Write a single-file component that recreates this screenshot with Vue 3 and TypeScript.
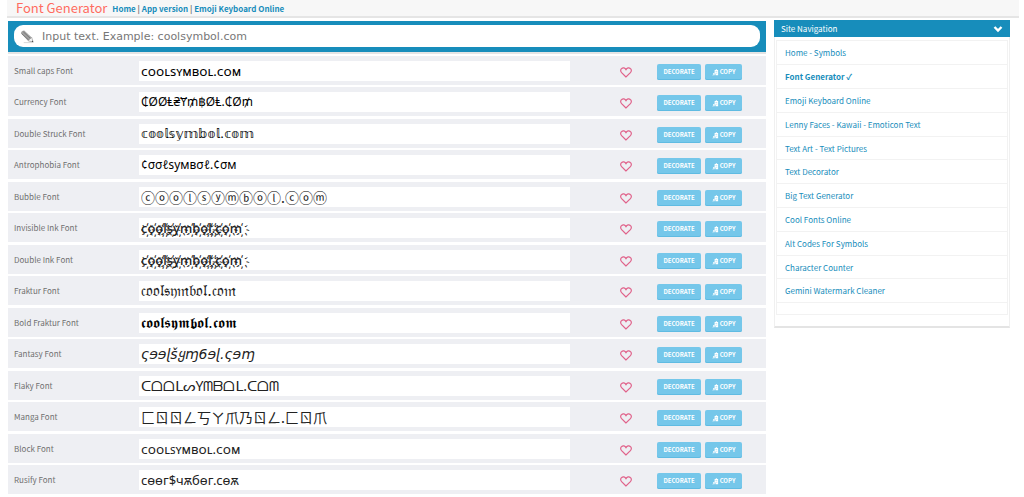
<script setup lang="ts">
import { ref } from 'vue'

interface FontRow { name: string; value: string; kind: string }

const text = ref('')
const rows: FontRow[] = [
  { name: 'Small caps Font', value: 'ᴄᴏᴏʟsʏᴍʙᴏʟ.ᴄᴏᴍ', kind: 'caps' },
  { name: 'Currency Font', value: '₵ØØⱠ₴Ɏ₥฿ØⱠ.₵Ø₥', kind: 'currency' },
  { name: 'Double Struck Font', value: '𝕔𝕠𝕠𝕝𝕤𝕪𝕞𝕓𝕠𝕝.𝕔𝕠𝕞', kind: 'math' },
  { name: 'Antrophobia Font', value: '¢σσℓѕумвσℓ.¢σм', kind: 'greek' },
  { name: 'Bubble Font', value: 'ⓒⓞⓞⓛⓢⓨⓜⓑⓞⓛ.ⓒⓞⓜ', kind: 'cjk' },
  { name: 'Invisible Ink Font', value: 'c҉o҉o҉l҉s҉y҉m҉b҉o҉l҉.҉c҉o҉m҉', kind: 'ink' },
  { name: 'Double Ink Font', value: 'c҉o҉o҉l҉s҉y҉m҉b҉o҉l҉.҉c҉o҉m҉', kind: 'ink' },
  { name: 'Fraktur Font', value: '𝔠𝔬𝔬𝔩𝔰𝔶𝔪𝔟𝔬𝔩.𝔠𝔬𝔪', kind: 'fraktur' },
  { name: 'Bold Fraktur Font', value: '𝖈𝖔𝖔𝖑𝖘𝖞𝖒𝖇𝖔𝖑.𝖈𝖔𝖒', kind: 'bold-fraktur' },
  { name: 'Fantasy Font', value: 'ςɘɘɭšყɱ6ɘɭ.ςɘɱ', kind: 'fantasy' },
  { name: 'Flaky Font', value: 'ᑕᗝᗝᒪᔕYᗰᗷᗝᒪ.ᑕᗝᗰ', kind: 'flaky' },
  { name: 'Manga Font', value: '匚ㄖㄖㄥ丂ㄚ爪乃ㄖㄥ.匚ㄖ爪', kind: 'cjk' },
  { name: 'Block Font', value: 'ᴄᴏᴏʟꜱʏᴍʙᴏʟ.ᴄᴏᴍ', kind: 'block' },
  { name: 'Rusify Font', value: 'cѳѳг$чѫбѳг.cѳѫ', kind: 'rusify' },
]

const links: string[] = [
  'Home - Symbols', 'Font Generator', 'Emoji Keyboard Online', 'Lenny Faces - Kawaii - Emoticon Text',
  'Text Art - Text Pictures', 'Text Decorator', 'Big Text Generator', 'Cool Fonts Online',
  'Alt Codes For Symbols', 'Character Counter', 'Gemini Watermark Cleaner',
]

function copy(value: string) {
  navigator.clipboard?.writeText(value)
}
</script>

<template>
  <div class="page">
    <header class="top">
      <h1>Font Generator</h1>
      <nav><a href="#">Home</a> | <a href="#">App version</a> | <a href="#">Emoji Keyboard Online</a></nav>
    </header>
    <div class="columns">
      <main>
        <div class="search">
          <label class="field">
            <svg class="pencil" viewBox="0 0 16 16" aria-hidden="true">
              <path d="M1 4.500Q1.500 1.500 4.500 1.500L12.500 9L13.800 14L8.500 12.500Z" fill="#a2a2a2" />
              <path d="M3.500 3L11.500 10.500M1.800 5L9.500 12" stroke="#707070" stroke-width=".9" />
              <path d="M8.500 12.500L12.500 9L14 14Z" fill="#f4f4f4" stroke="#a0a0a0" stroke-width=".7" />
              <path d="M12.300 13.500L14.200 14.200L13.600 12.200Z" fill="#444" />
              <path d="M4 14.500H13" stroke="#ccc" stroke-width=".8" />
            </svg>
            <input v-model="text" type="text" aria-label="Input text" placeholder="Input text. Example: coolsymbol.com">
          </label>
        </div>
        <section v-for="(row, i) in rows" :key="row.name" class="row">
          <label :for="'font-' + i">{{ row.name }}</label>
          <input :id="'font-' + i" class="value" :class="row.kind" type="text" readonly :value="row.value">
          <div class="actions">
            <button class="heart" type="button" :aria-label="'Like ' + row.name">
              <svg viewBox="0 0 12 11" aria-hidden="true"><path d="M6 10L1.6 5.6C.3 4.2.4 2.3 1.7 1.4 3 .4 5 .8 6 2.6 7 .8 9 .4 10.3 1.4c1.3.9 1.4 2.8.1 4.2Z" fill="none" stroke="#e0628a" stroke-width="1.2" /></svg>
            </button>
            <button class="btn decorate" type="button">DECORATE</button>
            <button class="btn copy" type="button" @click="copy(row.value)">
              <svg viewBox="0 0 8 8" aria-hidden="true"><path d="M3 1h1l1-1 1 1h1v6H4V5H3Z" fill="#fff" /><path d="M0 7h3V4L1 5l1 1Z" fill="#fff" /><path d="M4 3h2M5 5h1" stroke="#75c7ea" stroke-width=".6" /></svg>
              COPY
            </button>
          </div>
        </section>
      </main>
      <aside>
        <h2>Site Navigation
          <svg viewBox="0 0 10 8" aria-hidden="true"><path d="M1.500 2L5 5.500 8.500 2" fill="none" stroke="#fff" stroke-width="2.400" /></svg>
        </h2>
        <ul>
          <li v-for="(link, i) in links" :key="link"><a href="#" :class="{ current: i === 1 }">{{ link }}<span v-if="i === 1" class="tick"> ✓</span></a></li>
          <li class="blank"></li>
        </ul>
      </aside>
    </div>
  </div>
</template>

<style>
body { margin: 0; background: #fff; overflow: hidden; }
</style>

<style scoped>
* { box-sizing: border-box; }
.page { font-family: "Noto Sans CJK SC", sans-serif; font-size: 8px; color: #707070; }
a { color: #178dbb; text-decoration: none; }
.top { display: flex; align-items: center; gap: 5px; height: 18px; margin: 0 5px 2px 7px; padding-left: 9px; background: #f7f7f7; border-bottom: 2px solid #e5e5e5; }
h1 { margin: 0; font-size: 13px; line-height: 16px; font-weight: 400; color: #ff6c60; }
.top nav { font-weight: 700; line-height: 16px; padding-top: 2px; }
.columns { display: grid; grid-template-columns: minmax(0, 758fr) 236fr; gap: 8px; align-items: start; margin: 0 14px 0 8px; }
main { padding-top: 1px; }
.search { padding: 4px 6px; height: 31px; background: #178dbb; margin-bottom: 4px; box-shadow: 0 2px 0 #e4e4e4; }
.field { display: flex; align-items: center; gap: 7px; height: 22px; padding: 0 6px; border-radius: 9px; background: #fff; }
.pencil { width: 15px; height: 15px; }
.field input { flex: 1; min-width: 0; border: 0; outline: 0; padding: 0; background: none; font: 11px "DejaVu Sans", sans-serif; }
.field input::placeholder { color: #777; opacity: 1; }
.row { display: grid; grid-template-columns: 125fr 431fr 189fr; align-items: center; height: 29px; margin-bottom: 2px; padding: 0 7px 0 6px; background: #eeeff3; }
.row:nth-child(odd) { margin-bottom: 3px; }
.value { width: 100%; min-width: 0; height: 20px; padding: 0 2px; border: 0; outline: 0; background: #fff; color: #222; font: 13px "Noto Sans", "DejaVu Sans", sans-serif; }
.caps { color: #000; }
.ink { font-weight: 500; }
.currency, .greek { font-size: 12px; color: #000; }
.math { font-family: "DejaVu Sans", sans-serif; color: #000; }
.fraktur { font-family: "DejaVu Sans", sans-serif; font-size: 16px; }
.bold-fraktur { font-family: "DejaVu Sans", sans-serif; font-size: 15px; color: #000; }
.cjk { font-family: "Noto Sans CJK SC", sans-serif; font-size: 14px; }
.fantasy { font-family: "DejaVu Sans", sans-serif; font-size: 14px; font-style: italic; }
.flaky { font-size: 14px; }
.actions { display: flex; align-items: center; justify-content: flex-end; gap: 4px; padding: 3px 17px 0 0; }
button { border: 0; padding: 0; font: inherit; }
.heart { width: 12px; height: 12px; background: none; margin-right: 21px; }
.heart svg { display: block; width: 12px; height: 11px; }
.btn { display: flex; align-items: center; justify-content: center; gap: 1px; height: 16px; border-radius: 2px; background: #75c7ea; box-shadow: inset 0 -1px 0 #5fbbe2; color: #fff; font-size: 6px; font-weight: 700; line-height: 14px; }
.decorate { width: 44px; }
.copy { width: 37px; }
.copy svg { width: 7px; height: 7px; }
aside { border: 1px solid #f0f0f0; border-top: 0; border-bottom: 2px solid #e4e4e4; padding-bottom: 11px; }
h2 { display: flex; align-items: center; justify-content: space-between; height: 17px; margin: 0 -1px 3px; padding: 0 7px; background: #178dbb; color: #fff; font-size: 8px; font-weight: 400; }
h2 svg { width: 10px; height: 8px; }
ul { list-style: none; margin: 0 1px; padding: 0; border: 1px solid #f2f2f2; }
li { height: 24px; padding-left: 8px; border-bottom: 1px solid #f2f2f2; line-height: 23px; }
li:nth-child(5n) { height: 23px; }
.blank { height: 11px; border: 0; }
.current { font-weight: 700; }
</style>
